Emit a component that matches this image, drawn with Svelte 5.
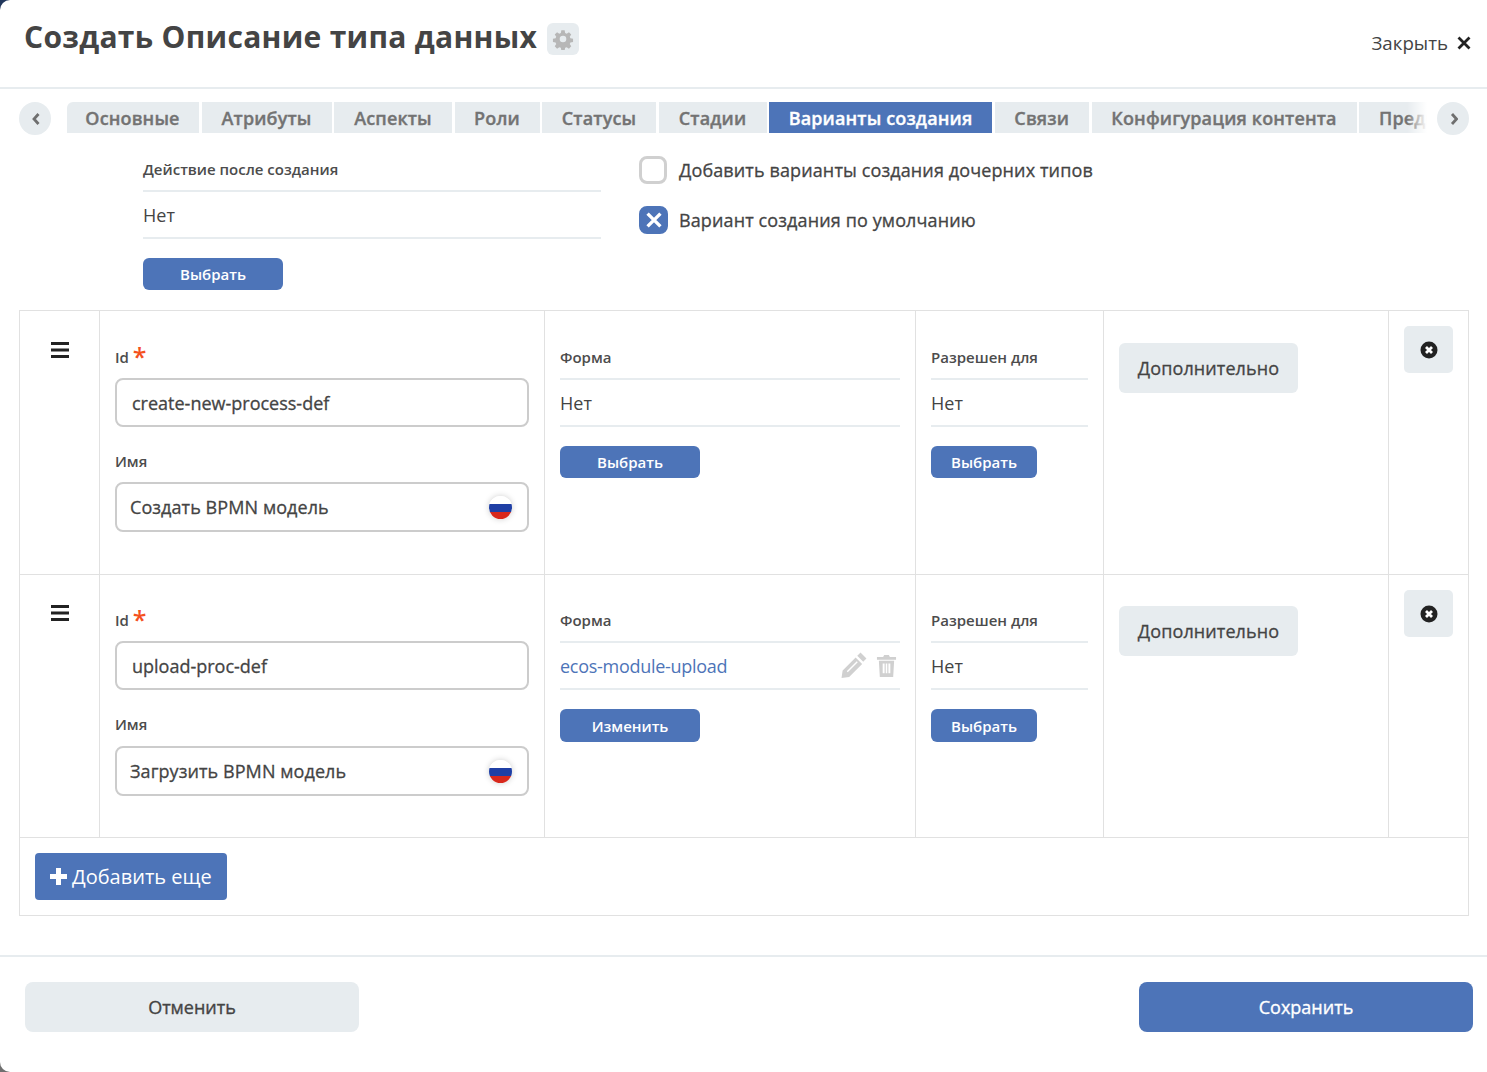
<script>
  const tabs = [
    { label: 'Основные', w: 132 },
    { label: 'Атрибуты', w: 130 },
    { label: 'Аспекты', w: 118 },
    { label: 'Роли', w: 85 },
    { label: 'Статусы', w: 114 },
    { label: 'Стадии', w: 108 },
    { label: 'Варианты создания', w: 223, active: true },
    { label: 'Связи', w: 94.5 },
    { label: 'Конфигурация контента', w: 265 },
    { label: 'Предпросмотр', w: 160 }
  ];
  const rows = [
    { id: 'create-new-process-def', name: 'Создать BPMN модель', form: null },
    { id: 'upload-proc-def', name: 'Загрузить BPMN модель', form: 'ecos-module-upload' }
  ];
</script>

<div class="modal">
  <header class="head">
    <div class="title-wrap">
      <h1>Создать Описание типа данных</h1>
      <span class="gear">
        <svg viewBox="0 0 24 24" width="22" height="22"><path fill="#b7b7b7" fill-rule="evenodd" d="M10 1.5h4l.6 3.2 1.9.8 2.7-1.8 2.8 2.8-1.8 2.7.8 1.9 3.2.6v4l-3.2.6-.8 1.9 1.8 2.7-2.8 2.8-2.7-1.8-1.9.8-.6 3.2h-4l-.6-3.2-1.9-.8-2.7 1.8-2.8-2.8 1.8-2.7-.8-1.9-3.2-.6v-4l3.2-.6.8-1.9-1.8-2.7 2.8-2.8 2.7 1.8 1.9-.8zM12 8a4 4 0 1 0 0 8 4 4 0 0 0 0-8z" transform="translate(1.2 1.2) scale(.9)"/></svg>
      </span>
    </div>
    <div class="close">
      <span>Закрыть</span>
      <svg viewBox="0 0 14 14" width="14" height="14"><path d="M1.5 1.5l11 11M12.5 1.5l-11 11" stroke="#222" stroke-width="2.8" fill="none"/></svg>
    </div>
  </header>

  <nav class="tabs-row">
    <span class="arrow">
      <svg viewBox="0 0 10 14" width="10" height="14"><path d="M8.5 2L4 7l4.500 5" stroke="#6f6f6f" stroke-width="2.8" fill="none"/></svg>
    </span>
    <div class="tabs">
      {#each tabs as t}
        <div class="tab" class:active={t.active} style="width:{t.w}px">{t.label}</div>
      {/each}
      <div class="fade"></div>
    </div>
    <span class="arrow">
      <svg viewBox="0 0 10 14" width="10" height="14"><path d="M4 2l4.500 5L4 12" stroke="#6f6f6f" stroke-width="2.8" fill="none"/></svg>
    </span>
  </nav>

  <section class="top">
    <div class="action">
      <div class="small-label">Действие после создания</div>
      <div class="value-box">Нет</div>
      <button class="btn wide">Выбрать</button>
    </div>
    <div class="checks">
      <label class="check">
        <span class="box"></span>
        <span>Добавить варианты создания дочерних типов</span>
      </label>
      <label class="check">
        <span class="box on">
          <svg viewBox="0 0 14 14" width="18" height="18"><path d="M2 2l10 10M12 2L2 12" stroke="#fff" stroke-width="2.6" fill="none"/></svg>
        </span>
        <span>Вариант создания по умолчанию</span>
      </label>
    </div>
  </section>

  <section class="table">
    {#each rows as r}
      <div class="row">
        <div class="cell grip">
          <svg viewBox="0 0 18 16" width="18" height="16"><path d="M0 1.5h18M0 8h18M0 14.5h18" stroke="#222" stroke-width="3"/></svg>
        </div>
        <div class="cell fields">
          <div class="small-label id-label">Id <span class="req">*</span></div>
          <div class="input id-input">{r.id}</div>
          <div class="small-label name-label">Имя</div>
          <div class="input name-input">
            <span>{r.name}</span>
            <span class="flag"></span>
          </div>
        </div>
        <div class="cell pick">
          <div class="small-label">Форма</div>
          {#if r.form}
            <div class="value-box link">
              <span>{r.form}</span>
              <span class="tools">
                <svg viewBox="0 0 24 24" width="26" height="26"><path fill="#d0d0d0" d="M18 .5l5.500 5.500-3 3L15 3.500zM13.500 5l6 6-12 12-7 1 1-7z"/><path d="M5.800 18.200L15 9" stroke="#fff" stroke-width="1.300"/></svg>
                <svg viewBox="0 0 22 26" width="21" height="25"><path fill="#d0d0d0" fill-rule="evenodd" d="M1 4h6.500l1-2h5l1 2H21v3H1zM3 8h16l-1 17H4zM7 11v10h2V11zm3.200 0v10h1.600V11zM13 11v10h2V11z"/></svg>
              </span>
            </div>
            <button class="btn wide">Изменить</button>
          {:else}
            <div class="value-box">Нет</div>
            <button class="btn wide">Выбрать</button>
          {/if}
        </div>
        <div class="cell pick">
          <div class="small-label">Разрешен для</div>
          <div class="value-box">Нет</div>
          <button class="btn full">Выбрать</button>
        </div>
        <div class="cell more-cell">
          <button class="more">Дополнительно</button>
        </div>
        <div class="cell del-cell">
          <span class="del">
            <svg viewBox="0 0 18 18" width="18" height="18"><circle cx="9" cy="9" r="8.500" fill="#222"/><path d="M6 6l6 6M12 6l-6 6" stroke="#fff" stroke-width="2.800"/></svg>
          </span>
        </div>
      </div>
    {/each}
    <div class="add-row">
      <button class="add">
        <svg viewBox="0 0 17 17" width="17" height="17"><path d="M8.500 0v17M0 8.500h17" stroke="#fff" stroke-width="5"/></svg>
        <span>Добавить еще</span>
      </button>
    </div>
  </section>

  <footer class="foot">
    <button class="foot-btn cancel">Отменить</button>
    <button class="foot-btn save">Сохранить</button>
  </footer>
</div>

<style>
  :global(body) {
    margin: 0;
    background: linear-gradient(#22375c 50%, #6f6f6f 50%) 0 0 / 20px 1072px no-repeat, #fff;
    font-family: "Open Sans", "Noto Sans", sans-serif;
    color: #444;
  }
  .modal {
    width: 1487px;
    height: 1072px;
    background: #fff;
    border-radius: 10px;
    overflow: hidden;
  }
  .head {
    box-sizing: border-box;
    border-bottom: 2px solid #e7ecef;
    height: 89px;
    padding: 0 16px 0 24px;
    display: flex;
    justify-content: space-between;
  }
  .title-wrap { display: flex; align-items: center; height: 74px; gap: 10px; }
  h1 {
    margin: 0;
    font-size: 30px;
    font-weight: 700;
    color: #444;
    line-height: 40px;
    letter-spacing: .29px;
    white-space: nowrap;
  }
  .gear {
    width: 32px; height: 32px;
    margin-top: 4px;
    background: #e7ecef;
    border-radius: 6px;
    display: flex; align-items: center; justify-content: center;
  }
  .close {
    display: flex; align-items: center; gap: 9px;
    height: 86px;
    font-size: 18.7px;
    color: #444;
  }
  .close span { margin-top: -2px; }
  .tabs-row {
    display: flex;
    align-items: flex-start;
    padding: 13px 18px 0 19px;
    height: 54px;
    box-sizing: border-box;
  }
  .arrow {
    flex: none;
    width: 32px; height: 33px;
    border-radius: 50%;
    background: #e7ecef;
    display: flex; align-items: center; justify-content: center;
  }
  .tabs {
    flex: none;
    width: 1360px;
    display: flex;
    gap: 2.5px;
    overflow: hidden;
    position: relative;
    margin: 0 10px 0 16px;
  }
  .tab {
    flex: none;
    height: 31px;
    box-sizing: border-box;
    background: #e7ecef;
    color: #737373;
    font-size: 18px;
    font-weight: 600;
    line-height: 32px;
    letter-spacing: .14px;
    -webkit-text-stroke: .35px currentColor;
    text-align: center;
    white-space: nowrap;
    overflow: hidden;
  }
  .tab:first-child { border-top-left-radius: 6px; padding-right: 1px; }
  .tab:nth-last-child(2) { text-align: left; padding-left: 20px; }
  .tab.active { background: #4d74b8; color: #fff; }
  .fade {
    position: absolute;
    right: 0; top: 0; bottom: 0;
    width: 20px;
    background: linear-gradient(to right, rgba(255,255,255,0), #fff);
  }
  .top {
    display: flex;
    height: 167px;
    box-sizing: border-box;
    padding: 0 0 0 143px;
  }
  .action { --off: 1px; width: 458px; padding-top: 16px; }
  .small-label {
    font-size: 15px;
    font-weight: 600;
    color: #4c4c4c;
    line-height: 20px;
    white-space: nowrap;
  }
  .value-box {
    margin-top: 11px;
    height: 49px;
    box-sizing: border-box;
    border-top: 2px solid #e7ecef;
    border-bottom: 2px solid #e7ecef;
    padding-top: 1px;
    font-size: 18px;
    line-height: 42px;
    color: #444;
    display: flex;
    justify-content: space-between;
    align-items: center;
  }
  .value-box.link { color: #4d74b8; letter-spacing: -.28px; }
  .tools { display: flex; align-items: center; gap: 9px; margin-right: 3px; margin-top: -2px; }
  .btn {
    display: block;
    height: calc(33px - var(--off));
    margin-top: 19px;
    padding: 0;
    border: 0;
    border-radius: 6px;
    background: #4d74b8;
    color: #fff;
    font: 600 15px "Open Sans", sans-serif;
  }
  .btn.wide { width: 140px; }
  .btn.full { width: 106px; }
  .checks {
    margin-left: 38px;
    padding-top: 13px;
    display: flex;
    flex-direction: column;
    gap: 22px;
  }
  .check {
    display: flex;
    align-items: center;
    gap: 12px;
    height: 28px;
    font-size: 18px;
    font-weight: 500;
    letter-spacing: .12px;
    -webkit-text-stroke: .3px currentColor;
    color: #444;
  }
  .box {
    width: 28px; height: 28px;
    box-sizing: border-box;
    border: 3px solid #d0d0d0;
    border-radius: 8px;
    display: flex; align-items: center; justify-content: center;
  }
  .box.on { background: #4d74b8; border-color: #4d74b8; width: 29px; margin-right: -1px; }
  .table {
    margin: 0 18px 0 19px;
    border: 1px solid #e1e1e1;
    height: 606px;
    box-sizing: border-box;
  }
  .row {
    --off: 0px;
    display: grid;
    grid-template-columns: 79px 445px 371px 188px 285px 1fr;
    height: 263px;
    box-sizing: border-box;
    border-bottom: 1px solid #e1e1e1;
  }
  .row:first-child { --off: 1px; height: 264px; }
  .cell { border-left: 1px solid #e1e1e1; box-sizing: border-box; padding: 0 15px; }
  .cell:first-child { border-left: 0; }
  .grip { display: flex; justify-content: center; padding: calc(30px + var(--off)) 0 0 0; align-items: flex-start; }
  .fields { padding-top: calc(35px + var(--off)); }
  .id-label { height: 20px; }
  .req { color: #f4511e; font-size: 25px; font-weight: 600; line-height: 14px; vertical-align: -3px; }
  .input {
    box-sizing: border-box;
    height: 49px;
    border: 2px solid #ccc;
    border-radius: 8px;
    font-size: 18px;
    font-weight: 500;
    -webkit-text-stroke: .3px currentColor;
    color: #444;
    display: flex;
    align-items: center;
    justify-content: space-between;
  }
  .id-input { margin-top: 11px; padding-left: 15px; }
  .name-label { margin-top: 24px; }
  .name-input { margin-top: calc(12px - var(--off)); height: 50px; padding: 0 15px 0 13px; letter-spacing: .08px; }
  .flag {
    width: 23px; height: 23px;
    border-radius: 50%;
    background: linear-gradient(to bottom, #fff 0 35%, #1f3fa5 35% 71%, #d8281c 71% 100%);
    box-shadow: 0 0 6px rgba(0,0,0,.2);
  }
  .pick { padding-top: calc(35px + var(--off)); }
  .more-cell { padding-top: calc(31px + var(--off)); }
  .more {
    width: 179px;
    height: 50px;
    border: 0;
    border-radius: 6px;
    background: #e7ecef;
    color: #444;
    padding: 0;
    font: 500 18px "Open Sans", sans-serif;
    letter-spacing: .1px;
    -webkit-text-stroke: .3px currentColor;
  }
  .del-cell { padding-top: 15px; }
  .del {
    width: 49px; height: 47px;
    background: #e7ecef;
    border-radius: 5px;
    display: flex; align-items: center; justify-content: center;
  }
  .add-row { padding: 15px; }
  .add {
    display: flex;
    align-items: center;
    gap: 5px;
    height: 47px;
    width: 192px;
    padding: 0 0 0 15px;
    border: 0;
    border-radius: 4px;
    background: #4d74b8;
    color: #fff;
    font: 400 20px "Open Sans", sans-serif;
  }
  .foot {
    margin-top: 39px;
    height: 117px;
    box-sizing: border-box;
    border-top: 2px solid #e7ecef;
    padding: 25px 14px 0 25px;
    display: flex;
    justify-content: space-between;
  }
  .foot-btn {
    width: 334px; height: 50px;
    border: 0;
    border-radius: 8px;
    font: 500 18px "Open Sans", sans-serif;
    -webkit-text-stroke: .35px currentColor;
    padding: 0;
  }
  .cancel { background: #e7ecef; color: #444; }
  .save { background: #4d74b8; color: #fff; }
</style>
